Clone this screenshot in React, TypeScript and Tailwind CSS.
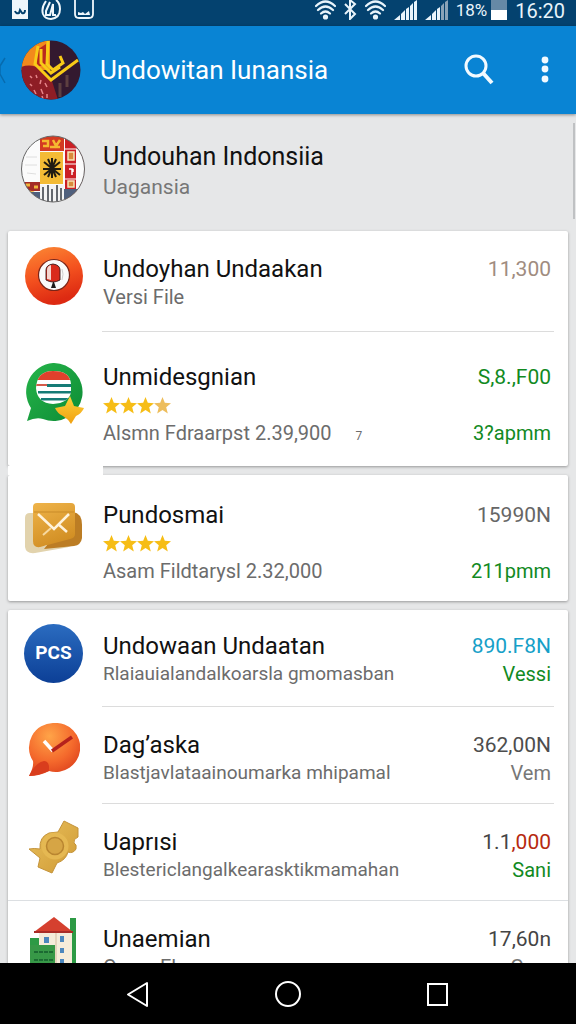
import React from "react";
import { clsx } from "clsx";

interface Item {
  title: string;
  subtitle: string;
  icon: React.JSX.Element;
  rating?: number;
  mark?: string;
  compact?: boolean;
  value: React.ReactNode;
  valueClass: string;
  note?: string;
  noteClass?: string;
  rowClass: string;
  divider?: "inset" | "full";
}

const PinIcon = () => (
  <svg viewBox="0 0 58 58" className="h-[58px] w-[58px]" aria-hidden="true">
    <defs>
      <linearGradient id="pin" x1="0" y1="0" x2="0.3" y2="1">
        <stop offset="0" stopColor="#fb8a35" />
        <stop offset="0.55" stopColor="#f4521f" />
        <stop offset="1" stopColor="#dd2a12" />
      </linearGradient>
    </defs>
    <circle cx="29" cy="29" r="29" fill="url(#pin)" />
    <circle cx="29" cy="28" r="15.5" fill="#fafafa" stroke="#7b2417" strokeWidth="1.2" />
    <path d="M21 33V23q0-5 7-6 7 1 7 6v10q-7 4-14 0z" fill="#d92b1c" stroke="#3a1a1a" strokeWidth="0.9" />
    <path d="M22 32V23q0-4 4-5v15z" fill="#f5d5cf" />
    <path d="M28 35l-2 6h5l-2-6z" fill="#1b1b1b" />
    <path d="M37 22q2 5 0 11" stroke="#cfcfcf" fill="none" />
  </svg>
);

const ChatIcon = () => (
  <svg viewBox="0 0 60 62" className="h-[62px] w-[60px]" aria-hidden="true">
    <defs>
      <linearGradient id="chat" x1="0" y1="0" x2="1" y2="1">
        <stop offset="0" stopColor="#26b54a" />
        <stop offset="1" stopColor="#0d8b35" />
      </linearGradient>
      <clipPath id="chatFace">
        <path d="M12 25Q13 8 29 8q17 0 18 13v8q-2 11-18 12-16-1-17-16z" />
      </clipPath>
      <linearGradient id="gold" x1="0" y1="0" x2="0" y2="1">
        <stop offset="0" stopColor="#ffd23a" />
        <stop offset="1" stopColor="#f0a010" />
      </linearGradient>
    </defs>
    <path d="M29 0a29 29 0 1 1-10 56q-7-2-16 2l4-13A29 29 0 0 1 29 0z" fill="url(#chat)" />
    <g clipPath="url(#chatFace)">
      <path fill="#fff" d="M10 6h40v40H10z" />
      <path fill="#e0402c" d="M10 6h40v11H10z" />
      <path fill="#d65b4b" d="M10 21h13v2H10z" />
      <path fill="#167b76" d="M23 21h27v3H23zM14 28h36v2.500H14zM17 35h32v2.500H17z" />
    </g>
    <path d="M46 33l4 10 10 2q-2 5-8 8l-5 8q-3-5-8-8-6-3-8-8l10-2z" fill="url(#gold)" />
  </svg>
);

const MailIcon = () => (
  <svg viewBox="0 0 60 54" className="h-[54px] w-[60px]" aria-hidden="true">
    <defs>
      <linearGradient id="mail" x1="0" y1="0" x2="0.4" y2="1">
        <stop offset="0" stopColor="#efb44a" />
        <stop offset="1" stopColor="#d28f24" />
      </linearGradient>
    </defs>
    <path d="M6 12h12v33l34-4q-4 5-12 6l-29 5q-9 1-10-6V17q0-5 5-5z" fill="#e2d3ad" />
    <path d="M49 11q9 1 9 13v13q-1 7-8 8l-30 3z" fill="#bc7d24" />
    <path d="M13 2h34q4 0 4 4v27q0 4-5 5l-30 8q-7 1-7-6V6q0-4 4-4z" fill="url(#mail)" />
    <path d="M10 11h40" stroke="#c98b28" />
    <path d="M14 13l16 15 15-15M34 23l9 8" fill="none" stroke="#fff3dc" strokeWidth="2.500" />
    <path d="M27 27l-8 7" stroke="#f7d9a0" strokeWidth="2" />
  </svg>
);

const PcsIcon = () => (
  <div className="flex h-[59px] w-[59px] items-center justify-center rounded-full bg-linear-to-b from-[#2b6cc0] to-[#0c3f96] text-[19px] font-bold text-white">
    PCS
  </div>
);

const CheckBubbleIcon = () => (
  <svg viewBox="0 0 52 54" className="h-[54px] w-[52px]" aria-hidden="true">
    <defs>
      <radialGradient id="bubble" cx="0.4" cy="0.25" r="0.8">
        <stop offset="0" stopColor="#ffa448" />
        <stop offset="0.6" stopColor="#f4692c" />
        <stop offset="1" stopColor="#dc3f1c" />
      </radialGradient>
    </defs>
    <path d="M26 0a24.500 24.500 0 1 1-5 48Q12 53 1 53q5-9 4-15A24.500 24.500 0 0 1 26 0z" fill="url(#bubble)" />
    <path d="M1 53q7-14 15-15 4 0 5 5v5Q12 52 1 53z" fill="#d93d1d" />
    <path d="M16 18l9 10" stroke="#fff" strokeWidth="3.500" />
    <path d="M24 28l20-14" stroke="#b5221c" strokeWidth="3.500" />
  </svg>
);

const BadgeIcon = () => (
  <svg viewBox="0 0 52 54" className="h-[54px] w-[52px]" aria-hidden="true">
    <defs>
      <linearGradient id="badge" x1="0" y1="0" x2="1" y2="1">
        <stop offset="0" stopColor="#e9c05c" />
        <stop offset="1" stopColor="#cf9a35" />
      </linearGradient>
    </defs>
    <path
      d="M36 1l14 7v9q-5 2-4 6 3 1 2 6-3 5-8 3-2 8-11 11l-5 10-14-6 2-9-11-9q5-1 11 0-1-12 9-16l9-1z"
      fill="url(#badge)"
      stroke="#c4933a"
    />
    <circle cx="27" cy="26" r="13.500" fill="#e5b852" />
    <circle cx="27" cy="26" r="8.500" fill="#d6a545" stroke="#b98530" strokeWidth="1.500" />
  </svg>
);

const HouseIcon = () => (
  <svg viewBox="0 0 50 54" className="h-[54px] w-[50px]" aria-hidden="true">
    <path fill="#2d9a45" d="M41 1h6v53h-6zM1 21h12v33H1z" />
    <path fill="#f5ecda" d="M10 14h33v40H10z" />
    <path fill="#e4d4bd" d="M26 15h2v39h-2z" />
    <path fill="#379847" d="M1 28h25v26H1z" />
    <path d="M5 35h19M5 43h19" stroke="#1b6a32" strokeWidth="2" strokeDasharray="4 1" />
    <path fill="#d5402f" d="M25 0l19 15H5z" />
    <path fill="#a92c27" d="M5 14h39v2H5z" />
    <path fill="#4c87bd" d="M15 20h5v6h-5zM31 19h4v6h-4zM31 31h4v5h-4zM31 42h4v5h-4z" />
  </svg>
);

const AppLogo = () => (
  <svg viewBox="0 0 60 60" className="h-[60px] w-[60px]" aria-hidden="true">
    <defs>
      <clipPath id="logoClip">
        <circle cx="30" cy="30" r="29.500" />
      </clipPath>
    </defs>
    <g clipPath="url(#logoClip)">
      <path fill="#33192f" d="M0 0h60v60H0z" />
      <path fill="#f28a1c" d="M0 0h29v30H0z" />
      <path fill="#8e1d25" d="M0 27q18-6 31 14l6 19H0z" />
      <path fill="#b9281f" d="M16 10l9-6v20l-9 3z" />
      <path
        d="M17 6l-3 18 16 16 27-20M27 1l-1 23 6 6 10-7-3-7M20 9v14l10 10 9-6"
        fill="none"
        stroke="#f8cb18"
        strokeWidth="3"
      />
      <path d="M9 36l2 2m4-3l1 3m4 2l-1 4m5-1l2 4m-13 3l2 4m5-5l2 5m4 0v4m-17-14l2 2m10 10l1 3" stroke="#e78589" strokeWidth="1.500" />
      <path d="M39 43v14M46 35v12" stroke="#5d3f40" strokeWidth="3" />
    </g>
  </svg>
);

const CrestIcon = () => (
  <svg viewBox="0 0 66 68" className="h-[68px] w-[66px]" aria-hidden="true">
    <defs>
      <clipPath id="crestClip">
        <ellipse cx="33" cy="34" rx="31.500" ry="33" />
      </clipPath>
    </defs>
    <g clipPath="url(#crestClip)">
      <path fill="#fbfbfb" d="M0 0h66v68H0z" />
      <path fill="#d33a22" d="M20 0h24v16H20z" />
      <path d="M22 6h6v5h-5M33 5l3 6 4-6M30 12h10" stroke="#f5b930" strokeWidth="2.500" fill="none" />
      <path fill="#f4bb35" d="M20 17h23v32H20z" />
      <path d="M32 23v20M24 27l16 13M40 27L24 40M23 34h18M28 24l8 18M36 24l-8 18" stroke="#201b12" strokeWidth="2" />
      <path fill="#cb1f25" d="M45 0h21v66H45z" />
      <path d="M44 14h22M44 29h22M44 44h22" stroke="#fff" />
      <path d="M48 17h6v8h-6zM48 46h6v6h-6z" fill="#d98a3a" stroke="#f6e5b7" strokeWidth="1.500" />
      <path d="M49 34h3v6M53 34v3" stroke="#fff" strokeWidth="1.500" fill="none" />
      <path fill="#fbfbfb" d="M56 14h10v40H56z" />
      <path fill="#a42b26" d="M4 47h16v9H4z" />
      <path d="M6 50h4M14 52h4M9 57l5 1" stroke="#f0b53c" strokeWidth="3" />
      <path fill="#4f607d" d="M7 57h13v11H7zM44 54h18v10H44z" />
      <path fill="#f4f4f4" d="M20 50h24v18H20z" />
      <path d="M23 52v14M28 50v18M32 54v13M37 50v16M41 53v12" stroke="#343a42" strokeWidth="1.500" />
      <path d="M6 22h11M5 30h12M7 38l9 1" stroke="#dedede" />
    </g>
    <ellipse cx="33" cy="34" rx="31.500" ry="33" fill="none" stroke="#666" />
  </svg>
);

const Wifi = () => (
  <svg viewBox="0 0 21 20" className="h-5 w-[21px]" fill="none" stroke="#e9f4fb" strokeWidth="2.200" strokeLinecap="round" aria-hidden="true">
    <path d="M1 6q9.500-9 19 0M3 10q7.500-7 15 0M6 13.500q4.500-4 9 0" />
    <circle cx="10.500" cy="17" r="1.500" fill="#e9f4fb" />
  </svg>
);

const Bluetooth = () => (
  <svg viewBox="0 0 13 20" className="h-5 w-[13px]" fill="none" stroke="#e9f4fb" strokeWidth="2" aria-hidden="true">
    <path d="M1 4l10 10-5 5V0l5 4L1 14" />
  </svg>
);

const Signal = ({ dim }: { dim?: boolean }) => (
  <svg viewBox="0 0 23 20" className="h-5 w-[23px]" aria-hidden="true">
    <path d="M0 20l6-5v5zM7 14l4-4v10H7zM12 9l3-2v13h-3z" fill="#e9f4fb" />
    <path d="M16 6l3-3v17h-3zM20 2l3-2v20h-3z" fill={dim ? "#8aa3b8" : "#e9f4fb"} />
  </svg>
);

const Stars = ({ count }: { count: number }) => (
  <div className="flex h-7 items-center" role="img" aria-label={`${count} / 4`}>
    {[1, 2, 3, 4].map((n) => (
      <svg key={n} viewBox="0 0 17 17" className="h-[17px] w-[17px]" aria-hidden="true">
        <path
          d="M8.500 0l2.300 5.800 6.200.4-4.800 4 1.600 6.300-5.300-3.500-5.300 3.500 1.600-6.300L0 6.200l6.200-.4z"
          fill={n <= count ? "#f6bd16" : "#edbd5c"}
        />
      </svg>
    ))}
  </div>
);

const cards: Item[][] = [
  [
    {
      title: "Undoyhan Undaakan",
      subtitle: "Versi File",
      icon: <PinIcon />,
      value: "11,300",
      valueClass: "text-[#a08c80]",
      rowClass: "pt-6 pb-5",
      divider: "inset",
    },
    {
      title: "Unmidesgnian",
      subtitle: "Alsmn Fdraarpst 2.39,900",
      icon: <ChatIcon />,
      rating: 3,
      mark: "7",
      value: "S,8.,F00",
      valueClass: "text-[#128a1f]",
      note: "3?apmm",
      noteClass: "text-[#128a1f]",
      rowClass: "pt-[31px] pb-[19px]",
    },
  ],
  [
    {
      title: "Pundosmai",
      subtitle: "Asam Fildtarysl 2.32,000",
      icon: <MailIcon />,
      rating: 4,
      value: "15990N",
      valueClass: "text-[#666]",
      note: "211pmm",
      noteClass: "text-[#128a1f]",
      rowClass: "pt-[26px] pb-4",
    },
  ],
  [
    {
      title: "Undowaan Undaatan",
      subtitle: "Rlaiauialandalkoarsla gmomasban",
      icon: <PcsIcon />,
      compact: true,
      value: "890.F8N",
      valueClass: "text-[#16a0c8]",
      note: "Vessi",
      noteClass: "text-[#128a1f]",
      rowClass: "pt-[22px] pb-[18px]",
      divider: "inset",
    },
    {
      title: "Dag’aska",
      subtitle: "Blastjavlataainoumarka mhipamal",
      icon: <CheckBubbleIcon />,
      compact: true,
      value: "362,00N",
      valueClass: "text-[#4d4d4d]",
      note: "Vem",
      noteClass: "text-[#777]",
      rowClass: "pt-6 pb-4",
      divider: "inset",
    },
    {
      title: "Uaprısi",
      subtitle: "Blestericlangalkearasktikmamahan",
      icon: <BadgeIcon />,
      compact: true,
      value: (
        <>
          1.1<span className="text-[#b62a10]">,000</span>
        </>
      ),
      valueClass: "text-[#444]",
      note: "Sani",
      noteClass: "text-[#128a1f]",
      rowClass: "pt-6 pb-4",
      divider: "full",
    },
    {
      title: "Unaemian",
      subtitle: "Osms Elp",
      icon: <HouseIcon />,
      value: "17,60n",
      valueClass: "text-[#444]",
      note: "Gavr",
      noteClass: "text-[#777]",
      rowClass: "pt-6 pb-4",
    },
  ],
];

const Row = ({ item }: { item: Item }) => (
  <li className={clsx(item.divider === "full" && "border-b border-[#dcdfe2]")}>
    <div className={clsx("flex pr-[17px] whitespace-nowrap", item.rowClass)}>
      <div className={clsx("flex h-14 w-[95px] shrink-0 justify-center pr-1", !item.rating && "-mt-2")}>
        {item.icon}
      </div>
      <div className="min-w-0 flex-1">
        <div className="flex justify-between">
          <h2 className="text-[24px] leading-7 text-[#111]">{item.title}</h2>
          <span className={clsx("text-[21px] leading-7", item.valueClass)}>{item.value}</span>
        </div>
        {item.rating && <Stars count={item.rating} />}
        <div className="flex justify-between">
          <p className={clsx("leading-7 text-[#6c6c6c]", item.compact ? "text-[19px]" : "text-[20px]")}>
            {item.subtitle}
            {item.mark && <span className="pl-6 text-xs">{item.mark}</span>}
          </p>
          {item.note && <span className={clsx("text-[20px] leading-7", item.noteClass)}>{item.note}</span>}
        </div>
      </div>
    </div>
    {item.divider === "inset" && <div className="mr-[14px] ml-[94px] h-px bg-[#dcdcdc]" />}
  </li>
);

export default function App() {
  return (
    <div className="flex h-screen flex-col overflow-hidden bg-[#e6e7e8] font-[Roboto,sans-serif]">
      {/* Status bar */}
      <div className="flex h-[26px] shrink-0 items-start justify-between bg-[#04426f] pr-[11px] pl-3 text-[#e9f4fb]">
        <div className="flex gap-[13px]">
          <svg viewBox="0 0 16 20" className="h-5 w-4" aria-hidden="true">
            <path fill="#f0f7fc" d="M0 0h16v19H0z" />
            <path d="M3 11q1 3 4 2l1-3 2 3q3 1 3-3" fill="none" stroke="#04426f" strokeWidth="2" />
          </svg>
          <svg viewBox="0 0 20 20" className="h-5 w-5" fill="none" stroke="#f0f7fc" strokeWidth="2" aria-hidden="true">
            <path d="M5 1Q0 8 2 14q2 5 8 5 9-1 9-10 0-6-4-9M9 2l-4 9v4h4l3-11v11h3" />
          </svg>
          <svg viewBox="0 0 20 20" className="h-5 w-5" aria-hidden="true">
            <path d="M1 0v14q0 4 4 4h10q4 0 4-4V0" fill="none" stroke="#f0f7fc" strokeWidth="1.800" />
            <path d="M4 15v-3l3 1 2-1 2 2 4-3 1 4z" fill="#f0f7fc" />
          </svg>
        </div>
        <div className="flex items-start gap-2">
          <Wifi />
          <Bluetooth />
          <Wifi />
          <Signal />
          <Signal dim />
          <span className="text-[17px] leading-5">18%</span>
          <svg viewBox="0 0 16 20" className="-ml-1 h-5 w-4" aria-hidden="true">
            <path fill="#6689a6" d="M0 0h16v10H0z" />
            <path fill="#fff" d="M0 10h16v10H0z" />
          </svg>
          <span className="text-[20px] leading-[22px]">16:20</span>
        </div>
      </div>

      {/* App bar */}
      <header className="z-10 flex h-[88px] shrink-0 items-center bg-[#0984d4] text-white shadow-[0_1px_3px_rgba(0,0,0,0.4)]">
        <button aria-label="Back" className="h-8 w-[21px]">
          <svg viewBox="0 0 21 32" className="h-8 w-[21px]" fill="none" stroke="#076bae" strokeWidth="1.500">
            <path d="M5 4L0 12l0 8 5 9" />
          </svg>
        </button>
        <AppLogo />
        <h1 className="ml-[19px] flex-1 text-[26px] leading-8 whitespace-nowrap">Undowitan Iunansia</h1>
        <button aria-label="Search" className="mr-[34px]">
          <svg viewBox="0 0 32 32" className="h-8 w-8" fill="none" stroke="#f2faff" strokeWidth="3">
            <circle cx="13" cy="12" r="10" />
            <path d="M20 19l9 10" strokeWidth="4" />
          </svg>
        </button>
        <button aria-label="More options" className="mr-[15px]">
          <svg viewBox="0 0 32 32" className="h-8 w-8" fill="#f2faff">
            <circle cx="16" cy="6" r="3.400" />
            <circle cx="16" cy="15" r="3.400" />
            <circle cx="16" cy="25" r="3.400" />
          </svg>
        </button>
      </header>

      <main className="min-h-0 flex-1 overflow-hidden">
        <section className="flex h-[117px] justify-between pt-[21px] pl-5 whitespace-nowrap">
          <div className="flex gap-[17px]">
            <CrestIcon />
            <div className="pt-[7px]">
              <h2 className="text-[25px] leading-[30px] text-[#111]">Undouhan Indonsiia</h2>
              <p className="text-[21px] leading-[30px] text-[#777]">Uagansia</p>
            </div>
          </div>
          <div className="-mt-3 mr-px h-24 w-0.5 bg-[#bfc1c3]" />
        </section>

        {cards.map((items, idx) => (
          <React.Fragment key={idx}>
            {idx > 0 && (
              <div className="h-[9px] px-2">
                {idx === 1 && <div className="relative h-full w-[95px] bg-white" />}
              </div>
            )}
            <ul className="mx-2 rounded-xs bg-white shadow-[0_1px_3px_rgba(0,0,0,0.35)]">
              {items.map((item) => (
                <Row key={item.title} item={item} />
              ))}
            </ul>
          </React.Fragment>
        ))}
      </main>

      {/* Navigation bar */}
      <nav className="flex h-[61px] shrink-0 items-center justify-center gap-[118px] bg-black">
        <button aria-label="Back">
          <svg viewBox="0 0 32 32" className="h-8 w-8" fill="none" stroke="#fff" strokeWidth="2" strokeLinejoin="round">
            <path d="M25 5v23L6 16.500z" />
          </svg>
        </button>
        <button aria-label="Home">
          <svg viewBox="0 0 32 32" className="h-8 w-8" fill="none" stroke="#fff" strokeWidth="2">
            <circle cx="16" cy="16" r="12" />
          </svg>
        </button>
        <button aria-label="Recent apps">
          <svg viewBox="0 0 32 32" className="h-8 w-8" fill="none" stroke="#fff" strokeWidth="2">
            <path d="M6 6h19v21H6z" />
          </svg>
        </button>
      </nav>
    </div>
  );
}
